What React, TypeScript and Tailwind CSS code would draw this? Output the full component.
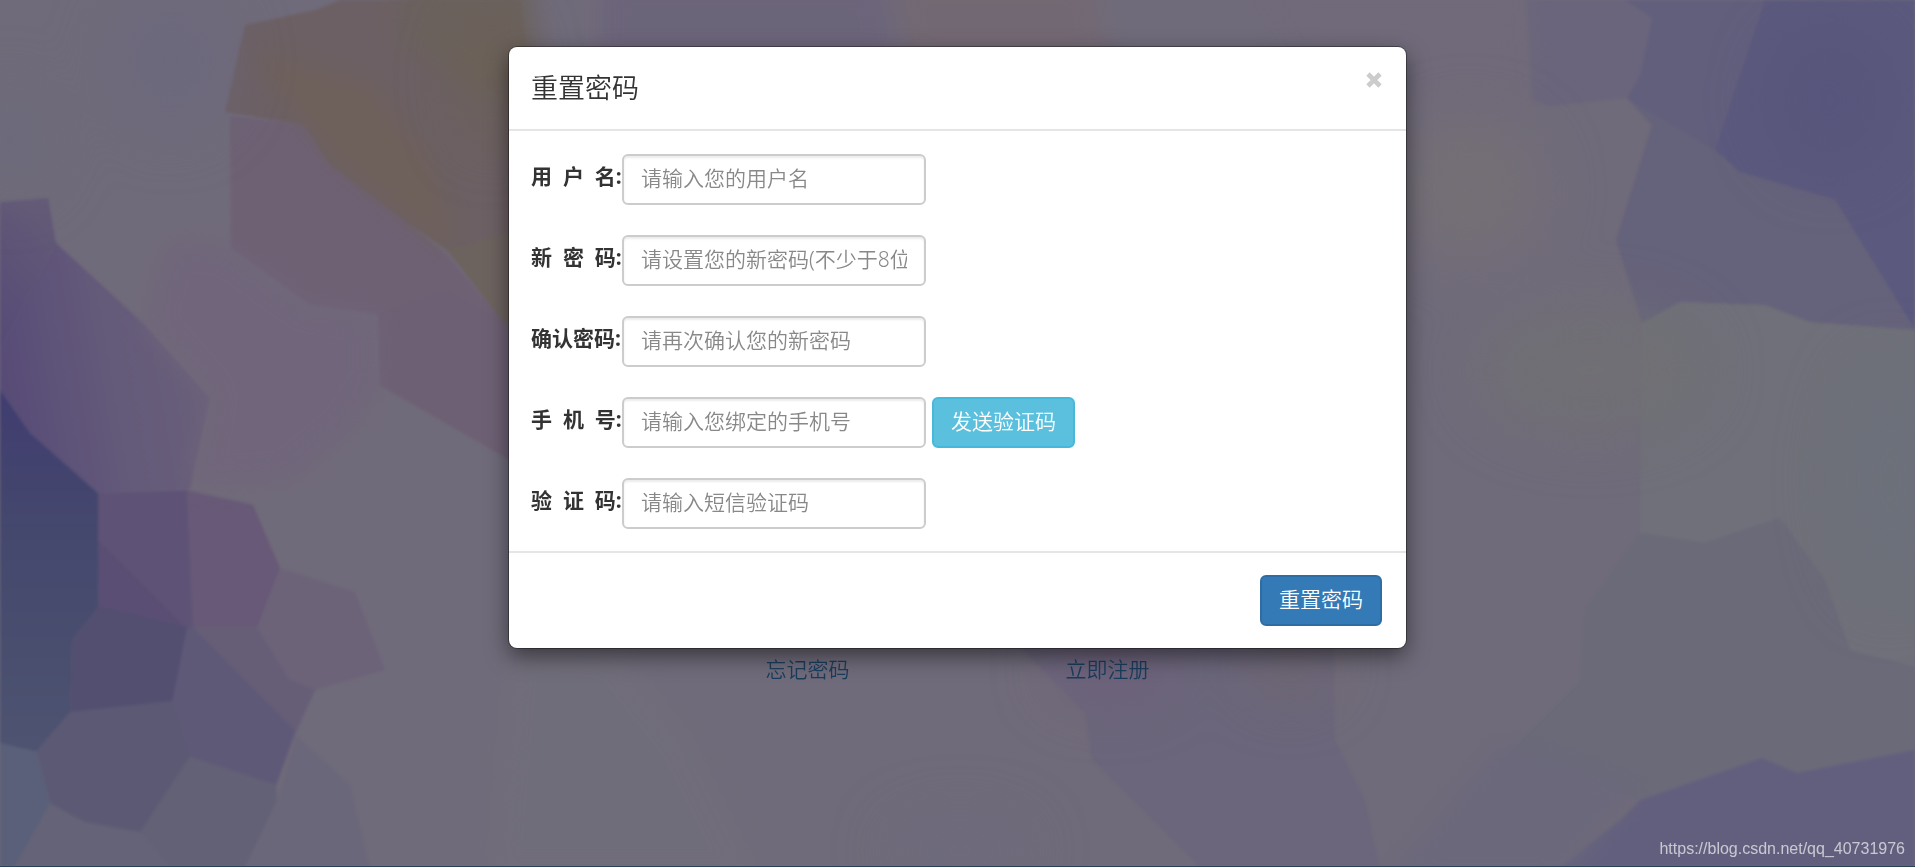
import clsx from "clsx";

type Field = {
  id: string;
  label: string;
  placeholder: string;
  type?: string;
  withSend?: boolean;
};

const fields: Field[] = [
  {
    id: "username",
    label: "用\u00a0\u00a0户\u00a0\u00a0名:",
    placeholder: "请输入您的用户名",
  },
  {
    id: "password",
    label: "新\u00a0\u00a0密\u00a0\u00a0码:",
    placeholder: "请设置您的新密码(不少于8位)",
    type: "password",
  },
  {
    id: "confirm",
    label: "确认密码:",
    placeholder: "请再次确认您的新密码",
    type: "password",
  },
  {
    id: "phone",
    label: "手\u00a0\u00a0机\u00a0\u00a0号:",
    placeholder: "请输入您绑定的手机号",
    type: "tel",
    withSend: true,
  },
  {
    id: "code",
    label: "验\u00a0\u00a0证\u00a0\u00a0码:",
    placeholder: "请输入短信验证码",
  },
];

// facets of the backdrop, back to front
const facets: [string, string][] = [
  ["245,25 315,10 340,0 520,0 560,300 510,330 447,250 330,170 305,125 225,112", "#6c6064"],
  ["447,250 510,232 540,360 505,325", "#6c635f"],
  ["230,116 305,125 330,165 385,205 447,255 510,330 510,460 380,385 378,314 310,305 231,248", "#6e6174"],
  ["378,314 380,385 510,460 510,326 447,290", "#6d6074"],
  ["0,202 48,198 56,243 0,350", "url(#violet)"],
  ["56,243 145,325 210,398 190,489 98,493 30,433 0,390 0,350", "url(#plum)"],
  ["0,390 30,433 98,493 98,607 72,640 70,715 36,752 0,743", "url(#navy)"],
  ["98,493 187,490 193,629 98,607", "#5e5276"],
  ["98,540 187,629 98,607", "#5a4e74"],
  ["187,490 253,505 280,568 257,628 193,629", "#675977"],
  ["98,606 190,628 173,703 70,713 72,640", "#534f70"],
  ["187,628 193,627 296,731 276,786 190,758 172,702", "#5f5978"],
  ["70,712 173,701 190,757 140,833 85,823 50,803 36,751", "#5c5974"],
  ["0,743 36,751 50,803 15,867 0,867", "#5a6079"],
  ["50,803 85,822 140,832 170,867 15,867", "#646378"],
  ["140,832 190,757 276,785 277,803 245,867 170,867", "#636176"],
  ["193,627 257,627 290,680 316,688 296,732", "#665e77"],
  ["280,568 355,592 385,670 316,690 290,680 257,628", "#6c6379"],
  ["296,735 350,785 370,867 245,867 277,800", "#6b677a"],
  ["1525,0 1625,0 1652,18 1640,75 1627,98 1550,106 1532,100", "#6a657c"],
  ["1625,0 1765,0 1755,60 1715,150 1652,125 1627,98 1640,75 1652,18", "#625f7d"],
  ["1765,0 1915,0 1915,330 1835,200 1740,172 1715,150 1735,90", "#5b597d"],
  ["1652,125 1627,98 1715,150 1740,172 1835,200 1915,330 1810,322 1765,305 1680,302 1642,323 1616,240", "#65627b"],
  ["1642,323 1680,302 1765,305 1810,322 1915,330 1915,667 1850,650 1825,580 1780,518 1705,543 1640,533", "#6f7079"],
  ["1640,533 1705,543 1780,518 1825,580 1850,650 1915,667 1915,750 1797,773 1762,758 1640,800 1500,760 1580,680 1585,610", "#6a6a79"],
  ["1915,750 1797,773 1762,758 1640,800 1620,820 1560,867 1915,867", "#625f7e"],
  ["1014,640 1085,713 1092,760 1200,867 1380,867 1365,800 1335,740 1333,640", "#6b667b"],
];

// neighbours with barely visible borders between them
const softFacets: [string, string][] = [
  ["400,-20 530,-20 540,90 470,90 400,40", "#6b625c"],
  ["245,52 285,62 370,85 430,160 455,235 448,250 385,200 335,160 308,125", "#6f6159"],
  ["170,240 231,248 310,305 378,315 378,385 350,430 290,480 190,485 210,398 145,325", "#71657b"],
  ["600,-20 880,-20 900,60 600,60", "#6b647b"],
  ["890,-20 1090,-20 1110,60 910,60", "#736872"],
  ["1405,-20 1525,-20 1532,100 1466,118 1405,92 1300,60 1250,-20", "#706a7a"],
  ["1500,740 1640,790 1560,880 1380,880", "#6b687c"],
  ["510,640 620,650 690,740 760,880 490,880", "#716e7a"],
];

const Backdrop = () => (
  <svg
    className="absolute inset-0 h-full w-full"
    viewBox="0 0 1915 867"
    preserveAspectRatio="none"
    aria-hidden="true"
  >
    <defs>
      <linearGradient id="violet" x1="0" y1="1" x2="0.4" y2="0">
        <stop offset="0" stopColor="#554a76" />
        <stop offset="1" stopColor="#625977" />
      </linearGradient>
      <linearGradient id="plum" x1="0" y1="0.6" x2="1" y2="0.4">
        <stop offset="0" stopColor="#574b77" />
        <stop offset="0.5" stopColor="#635979" />
        <stop offset="1" stopColor="#69607a" />
      </linearGradient>
      <linearGradient id="navy" x1="0" y1="0" x2="0" y2="1">
        <stop offset="0" stopColor="#403c70" />
        <stop offset="0.4" stopColor="#44486d" />
        <stop offset="1" stopColor="#4d5370" />
      </linearGradient>
      <filter id="edge" colorInterpolationFilters="sRGB">
        <feGaussianBlur stdDeviation="1.5" />
      </filter>
      <filter
        id="soft"
        x="-10%"
        y="-10%"
        width="120%"
        height="120%"
        colorInterpolationFilters="sRGB"
      >
        <feGaussianBlur stdDeviation="12" />
      </filter>
      <filter
        id="haze"
        x="-20%"
        y="-20%"
        width="140%"
        height="140%"
        colorInterpolationFilters="sRGB"
      >
        <feGaussianBlur stdDeviation="30" />
      </filter>
    </defs>
    <rect width="1915" height="867" fill="#706b7a" />
    <g filter="url(#edge)">
      {facets.map(([points, fill]) => (
        <polygon key={points} points={points} fill={fill} />
      ))}
    </g>
    <g filter="url(#soft)" opacity="0.85">
      {softFacets.map(([points, fill]) => (
        <polygon key={points} points={points} fill={fill} />
      ))}
    </g>
    <g filter="url(#haze)">
      <ellipse cx="170" cy="60" rx="60" ry="70" fill="#6a677e" opacity="0.6" />
      <ellipse cx="10" cy="140" rx="40" ry="50" fill="#69697c" opacity="0.7" />
      <ellipse cx="490" cy="80" rx="30" ry="70" fill="#6c6150" opacity="0.5" />
      <ellipse cx="1470" cy="190" rx="70" ry="70" fill="#757074" opacity="0.8" />
      <ellipse cx="1590" cy="370" rx="110" ry="60" fill="#707173" opacity="0.8" />
      <ellipse cx="1830" cy="100" rx="60" ry="70" fill="#57537b" opacity="0.6" />
      <ellipse cx="1890" cy="480" rx="50" ry="120" fill="#6b707b" opacity="0.7" />
      <ellipse cx="1110" cy="670" rx="60" ry="30" fill="#70597a" opacity="0.5" />
      <ellipse cx="1290" cy="665" rx="40" ry="30" fill="#706768" opacity="0.6" />
      <ellipse cx="960" cy="850" rx="70" ry="30" fill="#69697f" opacity="0.5" />
    </g>
    <rect y="866" width="1915" height="1" fill="#2b4155" />
  </svg>
);

const controlClass = "h-[51px] rounded-md border-2 px-[17px] pb-1 text-[21px]";

const FieldRow = ({ id, label, placeholder, type = "text", withSend }: Field) => (
  <div className="flex items-center">
    <label
      htmlFor={id}
      className="w-[91px] shrink-0 pb-2 font-bold whitespace-nowrap"
    >
      {label}
    </label>
    <input
      id={id}
      type={type}
      placeholder={placeholder}
      className={clsx(
        controlClass,
        "w-[304px] border-[#ccc] bg-white font-[350] shadow-[inset_0_2px_2px_rgba(0,0,0,0.075)] placeholder:text-[#888]",
      )}
    />
    {withSend && (
      <button
        type="button"
        className={clsx(
          controlClass,
          "ml-1.5 border-[#46b8da] bg-[#5bc0de] font-[350] text-white",
        )}
      >
        发送验证码
      </button>
    )}
  </div>
);

const ResetDialog = () => (
  <form
    role="dialog"
    aria-labelledby="reset-title"
    className="w-[897px] max-w-full rounded-lg bg-white shadow-[0_0_0_1px_rgba(0,0,0,0.35),0_8px_22px_rgba(0,0,0,0.5)]"
  >
    <div className="flex items-start justify-between border-b-2 border-[#e5e5e5] py-[22px] pr-6 pl-[22px]">
      <h4 id="reset-title" className="text-[27px] leading-[38px] font-[350]">
        重置密码
      </h4>
      <button type="button" aria-label="Close" className="pt-[3px]">
        <svg className="h-4 w-4" viewBox="0 0 16 16" aria-hidden="true">
          <path
            d="M2 2 14 14M14 2 2 14"
            fill="none"
            stroke="#ccc"
            strokeWidth="4.6"
          />
        </svg>
      </button>
    </div>
    <div className="flex flex-col gap-[30px] px-[22px] pt-[23px] pb-[22px]">
      {fields.map((field) => (
        <FieldRow key={field.id} {...field} />
      ))}
    </div>
    <div className="flex justify-end border-t-2 border-[#e5e5e5] py-[22px] pr-6 pl-[22px]">
      <button
        type="submit"
        className={clsx(
          controlClass,
          "border-[#2e6da4] bg-[#337ab7] font-[350] text-white",
        )}
      >
        重置密码
      </button>
    </div>
  </form>
);

export default function App() {
  return (
    <main className="relative min-h-screen overflow-hidden font-['Noto_Sans','Noto_Sans_CJK_SC',sans-serif] text-[21px] leading-[30px] text-[#333]">
      <Backdrop />
      <div className="relative flex justify-center gap-[216px] pt-[654px] font-[350] text-[#1a3c5c]">
        <a href="#forgot">忘记密码</a>
        <a href="#register">立即注册</a>
      </div>
      <div className="absolute inset-0 flex items-start justify-center pt-[47px]">
        <ResetDialog />
      </div>
      <p className="absolute right-2.5 bottom-1.5 font-['Liberation_Sans',sans-serif] text-base leading-6 text-white/65">
        https://blog.csdn.net/qq_40731976
      </p>
    </main>
  );
}
